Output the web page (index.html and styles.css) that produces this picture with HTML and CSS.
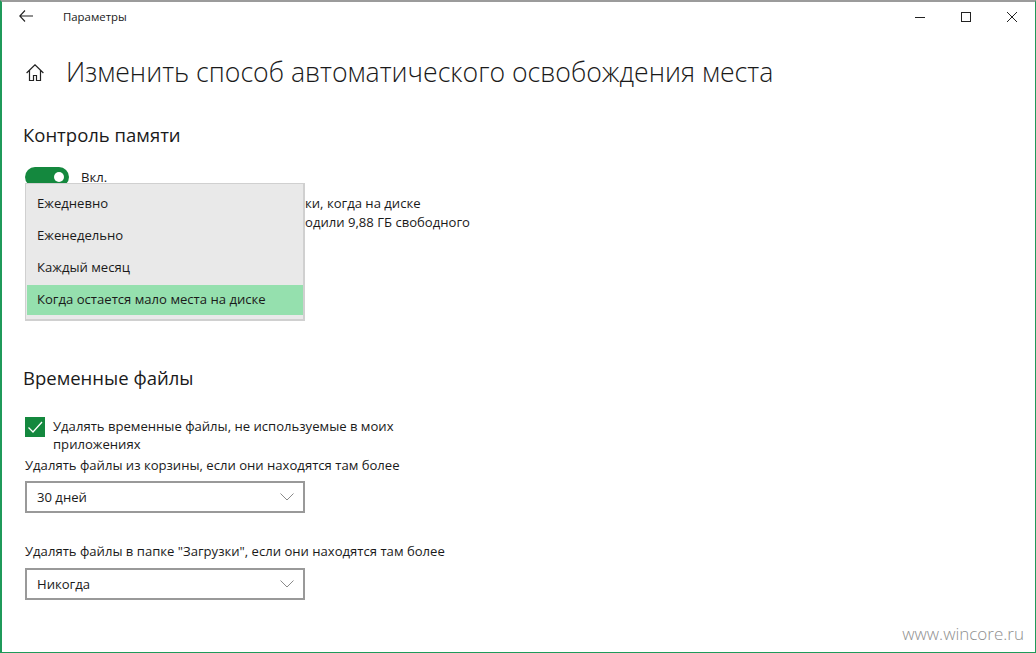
FILE: index.html

```html
<!DOCTYPE html>
<html lang="ru">
<head>
  <meta charset="UTF-8" />
  <title>Параметры</title>
  <link rel="stylesheet" href="styles.css">
</head>
<body>
  <div class="window">
    <header class="titlebar">
      <div class="titlebar-left">
        <svg class="back" width="14" height="12" viewBox="0 0 14 12"><path d="M6 .5.8 6 6 11.500M1 6h13" fill="none" stroke="#222" stroke-width="1.100"/></svg>
        <span class="app-name">Параметры</span>
      </div>
      <div class="controls">
        <div class="control"><svg width="10" height="10" viewBox="0 0 10 10"><path d="M0 5.500h10" stroke="#222" fill="none"/></svg></div>
        <div class="control"><svg width="10" height="10" viewBox="0 0 10 10"><rect x=".5" y=".5" width="9" height="9" stroke="#222" fill="none"/></svg></div>
        <div class="control"><svg width="10" height="10" viewBox="0 0 10 10"><path d="M0 0l10 10M10 0 0 10" stroke="#222" fill="none"/></svg></div>
      </div>
    </header>

    <div class="page-title">
      <svg class="home" width="18" height="17" viewBox="0 0 18 17"><path d="M.6 9 9 .8 17.400 9M3.500 6.500V16.500h4v-5h3v5h4V6.500" fill="none" stroke="#222" stroke-width="1.200"/></svg>
      <h1>Изменить способ автоматического освобождения места</h1>
    </div>

    <section class="storage">
      <h2>Контроль памяти</h2>
      <div class="toggle-row">
        <span class="toggle"><span class="knob"></span></span>
        <span>Вкл.</span>
      </div>
      <div class="behind-menu">
        <p>ки, когда на диске</p>
        <p>одили 9,88 ГБ свободного</p>
      </div>
      <ul class="menu">
        <li>Ежедневно</li>
        <li>Еженедельно</li>
        <li>Каждый месяц</li>
        <li class="selected">Когда остается мало места на диске</li>
      </ul>
    </section>

    <section class="temp">
      <h2>Временные файлы</h2>
      <div class="check-row">
        <span class="checkbox"><svg width="20" height="20" viewBox="0 0 20 20"><path d="M3.500 10.500 8 15l9-10" fill="none" stroke="#fff" stroke-width="1.300"/></svg></span>
        <span class="check-label">Удалять временные файлы, не используемые в моих приложениях</span>
      </div>
      <p class="field-label">Удалять файлы из корзины, если они находятся там более</p>
      <div class="select">
        <span>30 дней</span>
        <svg width="14" height="8" viewBox="0 0 14 8"><path d="M.5.5 7 7 13.500.5" fill="none" stroke="#8a8a8a"/></svg>
      </div>
      <p class="field-label second">Удалять файлы в папке "Загрузки", если они находятся там более</p>
      <div class="select">
        <span>Никогда</span>
        <svg width="14" height="8" viewBox="0 0 14 8"><path d="M.5.5 7 7 13.500.5" fill="none" stroke="#8a8a8a"/></svg>
      </div>
    </section>

    <div class="watermark">www.wincore.ru</div>
  </div>
</body>
</html>
```

FILE: styles.css

```css
html, body { margin: 0; padding: 0; height: 100%; overflow: hidden; }
body { font-family: "Open Sans", "Noto Sans", sans-serif; font-size: 13.100px; color: #1a1a1a; background: #fff; }
p, ul, h1, h2 { margin: 0; padding: 0; font-weight: normal; }

.window {
  position: relative; height: 653px; box-sizing: border-box;
  border: 2px solid #1f9a5a; border-top: 2px solid #9b9b9b; border-bottom-width: 1px; border-right-width: 1px;
  padding-left: 23px;
}

.titlebar { display: flex; justify-content: space-between; height: 30px; margin-left: -23px; }
.titlebar-left { display: flex; align-items: center; padding-bottom: 2px; }
.back { margin-left: 17px; }
.app-name { margin-left: 30px; font-size: 11.400px; }
.controls { display: flex; }
.control { width: 46px; height: 30px; display: flex; align-items: center; justify-content: center; }

.page-title { display: flex; align-items: center; height: 38px; margin-top: 21px; }
.home { margin-left: 1px; }
h1 { margin-left: 22px; font-size: 26.650px; font-weight: 300; white-space: nowrap; }

h2 { font-size: 18.500px; line-height: 24px; margin-left: -2px; }

.storage { position: relative; margin-top: 31px; height: 244px; }
.storage h2 { padding-top: 1px; }
.toggle-row { display: flex; align-items: center; gap: 12px; margin-top: 20px; height: 20px; }
.toggle { width: 44px; height: 20px; border-radius: 10px; background: #14883e; display: block; position: relative; }
.knob { position: absolute; right: 5px; top: 5px; width: 10px; height: 10px; border-radius: 50%; background: #fff; }

.behind-menu { margin-top: 7px; padding-left: 280px; line-height: 19px; white-space: nowrap; }

.menu {
  position: absolute; left: 0; top: 61px; width: 276px; height: 131px;
  list-style: none; background: #e9e9e9; border: 2px solid #d0d0d0; border-width: 1px 2px 2px 1px;
  padding: 0 0 4px 1px; box-sizing: content-box; display: flex; flex-direction: column; justify-content: flex-end; gap: 2px;
}
.menu li { height: 30px; line-height: 28px; padding-left: 10px; white-space: nowrap; }
.menu .selected { background: #95e0ae; }

.check-row { display: flex; gap: 8px; margin-top: 27px; width: 375px; }
.checkbox { width: 20px; height: 20px; flex: none; background: #14883e; display: block; }
.checkbox svg { display: block; }
.check-label { line-height: 18px; }
.field-label { margin-top: 3px; line-height: 18px; white-space: nowrap; }
.field-label.second { margin-top: 29px; }

.select {
  height: 28px; margin-top: 7px; border: 2px solid #999; display: flex; align-items: center;
  justify-content: space-between; padding: 0 9px 0 10px; width: 257px;
}
.field-label.second + .select { margin-top: 8px; }

.watermark { position: absolute; right: 11px; bottom: 7px; font-size: 17px; font-weight: 300; color: #8f8f8f; }
```
